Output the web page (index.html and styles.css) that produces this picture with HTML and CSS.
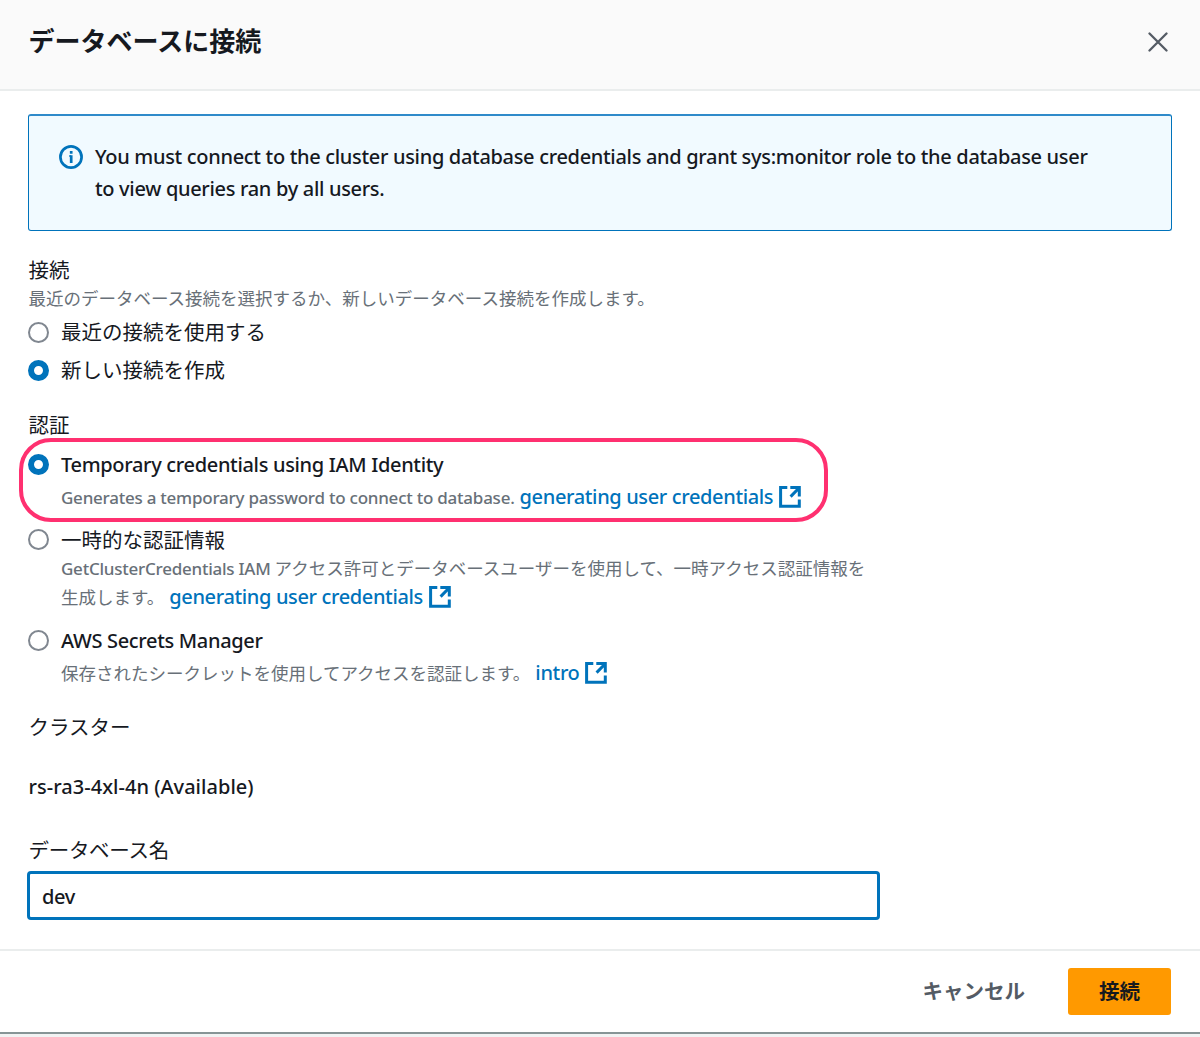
FILE: index.html
```html
<!DOCTYPE html>
<html lang="ja">
<head>
    <meta charset="UTF-8">
    <meta name="viewport" content="width=device-width, initial-scale=1.0">
    <title>データベースに接続</title>
    <link rel="stylesheet" href="styles.css">
</head>
<body>
    <div class="modal">
        <div class="modal-header">
            <h2>データベースに接続</h2>
            <button type="button" class="close-btn" aria-label="閉じる">
                <svg width="20" height="20" viewBox="0 0 20 20"><path d="M1.5 1.5L18.5 18.5M18.5 1.5L1.5 18.5"/></svg>
            </button>
        </div>
        <form class="modal-body">
            <div class="alert">
                <svg class="info-icon" width="24" height="24" viewBox="0 0 24 24">
                    <circle cx="12" cy="12" r="10.6"/>
                    <path d="M12.2 6V8.8M12.2 10.3V18"/>
                    <path class="serif" d="M10.2 11H12"/>
                </svg>
                <p class="latin">You must connect to the cluster using database credentials and grant sys:monitor role to the database user<br>to view queries ran by all users.</p>
            </div>

            <div class="form-group">
                <div class="label">接続</div>
                <div class="hint intro">最近のデータベース接続を選択するか、新しいデータベース接続を作成します。</div>
                <label class="option">
                    <input type="radio" name="connection">
                    <span>最近の接続を使用する</span>
                </label>
                <label class="option">
                    <input type="radio" name="connection" checked>
                    <span>新しい接続を作成</span>
                </label>
            </div>

            <div class="form-group auth">
                <div class="label">認証</div>
                <div class="option highlighted">
                    <input type="radio" name="auth" id="iam" checked>
                    <div>
                        <label for="iam" class="latin">Temporary credentials using IAM Identity</label>
                        <div class="hint spaced"><span class="latin small">Generates a temporary password to connect to database.</span><a href="#" class="latin link">generating user credentials<svg width="22" height="22" viewBox="0 0 22 22"><path d="M8.3 1.6H1.6V20.3H20.3V13.6M11.3 1.6H20.3V10.4M20 2L11.6 10.6"/></svg></a></div>
                    </div>
                </div>
                <div class="option">
                    <input type="radio" name="auth" id="temp">
                    <div>
                        <label for="temp">一時的な認証情報</label>
                        <div class="hint"><span class="latin small">GetClusterCredentials IAM</span> アクセス許可とデータベースユーザーを使用して、一時アクセス認証情報を<br>生成します。<a href="#" class="latin link">generating user credentials<svg width="22" height="22" viewBox="0 0 22 22"><path d="M8.3 1.6H1.6V20.3H20.3V13.6M11.3 1.6H20.3V10.4M20 2L11.6 10.6"/></svg></a></div>
                    </div>
                </div>
                <div class="option">
                    <input type="radio" name="auth" id="secrets">
                    <div>
                        <label for="secrets" class="latin">AWS Secrets Manager</label>
                        <div class="hint spaced">保存されたシークレットを使用してアクセスを認証します。<a href="#" class="latin link">intro<svg width="22" height="22" viewBox="0 0 22 22"><path d="M8.3 1.6H1.6V20.3H20.3V13.6M11.3 1.6H20.3V10.4M20 2L11.6 10.6"/></svg></a></div>
                    </div>
                </div>
            </div>

            <div class="form-group cluster">
                <div class="label">クラスター</div>
                <div class="cluster-name latin">rs-ra3-4xl-4n (Available)</div>
            </div>

            <div class="form-group database">
                <label class="label" for="database">データベース名</label>
                <input type="text" id="database" class="text-input latin" value="dev">
            </div>
        </form>
        <div class="modal-footer">
            <button type="button" class="cancel-btn">キャンセル</button>
            <button type="button" class="submit-btn">接続</button>
        </div>
    </div>
</body>
</html>
```
FILE: styles.css
```css
*, *::after {
    box-sizing: border-box;
}
body {
    margin: 0;
    background: #f2f3f3;
    color: #16191f;
    font-family: "Noto Sans CJK JP", sans-serif;
    font-size: 20.5px;
    line-height: 29px;
}
button, input {
    font: inherit;
    color: inherit;
    margin: 0;
}
.modal {
    height: 1034px;
    display: flex;
    flex-direction: column;
    background: #fff;
    border-bottom: 2px solid #879596;
}
.modal-header {
    height: 91px;
    display: flex;
    justify-content: space-between;
    padding: 22px 31px 0 28.5px;
    background: #fafafa;
    border-bottom: 2px solid #eaeded;
}
h2 {
    margin: 0;
    font-size: 26px;
    line-height: 36px;
    font-weight: 700;
}
.close-btn {
    width: 22px;
    height: 22px;
    margin-top: 9px;
    padding: 1px;
    border: none;
    background: none;
}
.close-btn svg {
    display: block;
    fill: none;
    stroke: #545b64;
    stroke-width: 2.3;
    stroke-linecap: round;
}
.modal-body {
    height: 858px;
    padding: 23px 28px 0;
}
.latin {
    font-family: "Noto Sans", "Noto Sans CJK JP", sans-serif;
    font-size: 20px;
    font-weight: 500;
    letter-spacing: -0.33px;
}
.latin.small {
    font-size: 17px;
    letter-spacing: -0.24px;
}
.alert {
    height: 117px;
    display: flex;
    gap: 12px;
    padding: 25px 29px;
    border: 1.5px solid #0073bb;
    border-top: 2px solid #2f8aca;
    border-radius: 3px;
    background: #f1faff;
}
.alert p {
    margin: 0;
    line-height: 32px;
    padding-left: 1px;
    letter-spacing: -0.32px;
}
.info-icon {
    flex: none;
    margin: 4px -1px 0 1px;
    fill: none;
    stroke: #0073bb;
    stroke-width: 2.7;
}
.info-icon .serif {
    stroke-width: 1.4;
}
.form-group {
    margin-top: 24px;
}
.label {
    display: block;
    padding-left: 0.5px;
}
.hint {
    font-size: 17.5px;
    line-height: 28px;
    color: #687078;
}
.hint.intro {
    padding-left: 0.5px;
}
.hint.spaced {
    padding-top: 4px;
}
.option {
    position: relative;
    display: flex;
    gap: 12px;
    margin-top: 9px;
}
.hint + .option {
    margin-top: 5px;
}
.option label {
    display: block;
}
.option input {
    appearance: none;
    flex: none;
    width: 21px;
    height: 21px;
    margin: 5px -0.4px 0 0.4px;
    border: 2px solid #808790;
    border-radius: 50%;
    background: #fff;
}
.option input:checked {
    border: 6.2px solid #0073bb;
}
.auth {
    margin-top: 26px;
}
.auth .option {
    margin-top: 11px;
}
.auth .option + .option {
    margin-top: 15px;
}
.auth .highlighted + .option {
    margin-top: 13px;
}
.auth .option input {
    margin-top: 4px;
}
.highlighted::after {
    content: "";
    position: absolute;
    left: -9px;
    top: -12px;
    width: 809px;
    height: 84px;
    border: 4px solid #ff3070;
    border-radius: 32px;
    pointer-events: none;
}
.link {
    margin-left: 5px;
    color: #0073bb;
    text-decoration: none;
    line-height: 20px;
}
.link.latin {
    letter-spacing: -0.36px;
}
.link svg {
    margin-left: 6px;
    vertical-align: -4px;
    fill: none;
    stroke: currentColor;
    stroke-width: 3;
}
.cluster {
    margin-top: 25px;
}
.cluster-name {
    margin-top: 31px;
    padding-left: 0.5px;
}
.cluster-name.latin {
    letter-spacing: 0.03px;
}
.database {
    margin-top: 34px;
}
.database .label {
    letter-spacing: -0.3px;
}
.text-input {
    width: 853px;
    height: 49px;
    margin: 7px 0 0 -1px;
    padding: 2px 12px 0;
    border: 3px solid #0073bb;
    border-radius: 4px;
    outline: none;
    background: #fff;
}
.modal-footer {
    flex: 1;
    display: flex;
    justify-content: flex-end;
    align-items: flex-start;
    gap: 14px;
    padding: 17px 29px 0;
    border-top: 2px solid #eaeded;
}
.modal-footer button {
    height: 47px;
    padding: 0 29px 2px;
    border: none;
    border-radius: 3px;
    background: none;
    font-weight: 700;
}
.modal-footer .cancel-btn {
    color: #545b64;
}
.modal-footer .submit-btn {
    background: #ff9900;
    width: 103px;
}
```
